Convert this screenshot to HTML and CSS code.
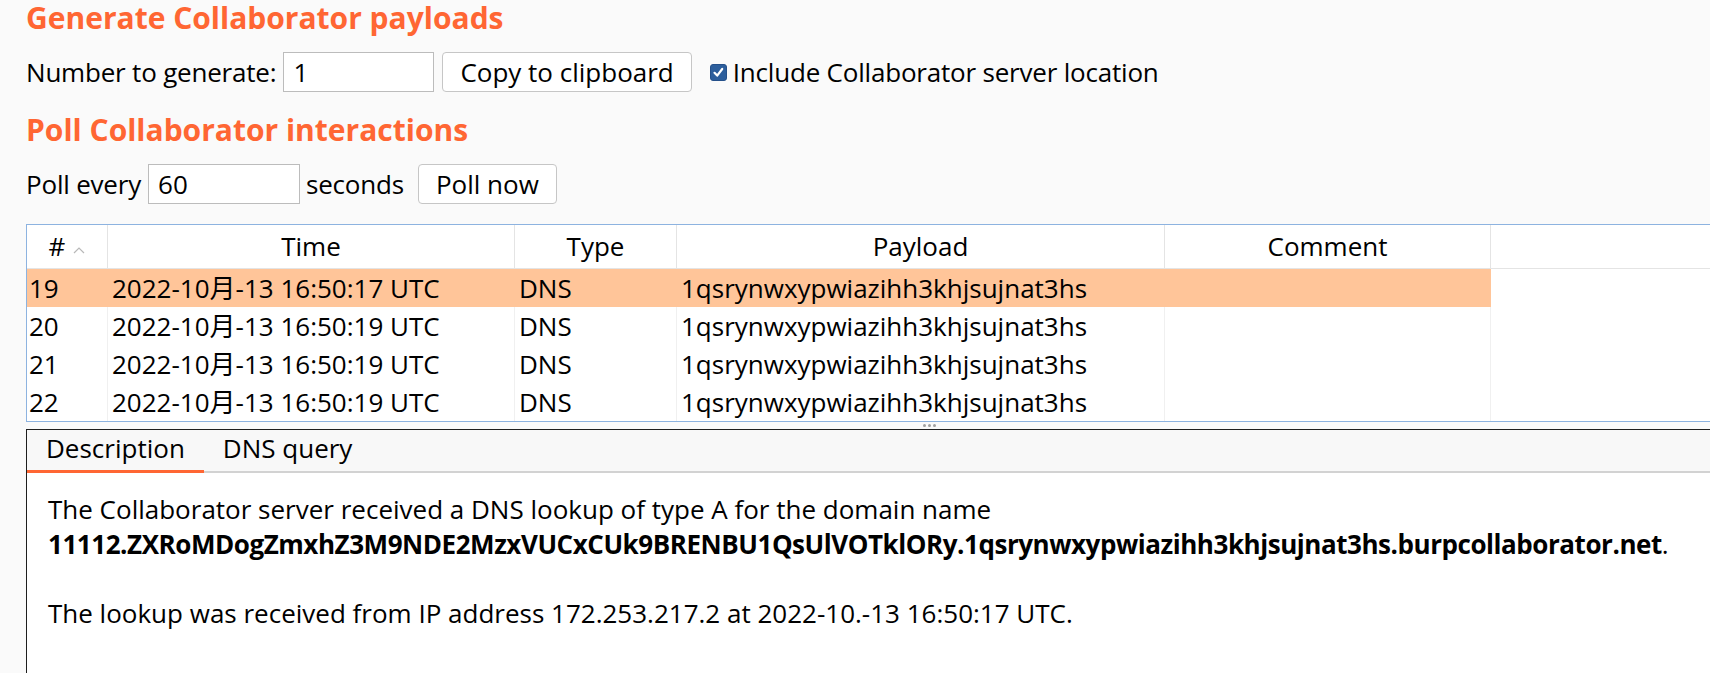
FILE: index.html
```html
<!DOCTYPE html>
<html lang="en">
<head>
<meta charset="utf-8">
<title>Collaborator client</title>
<link rel="stylesheet" href="styles.css">
</head>
<body>
<div class="page">
  <h2 class="title title1">Generate Collaborator payloads</h2>
  <div class="row row1">
    <span class="label">Number to generate:</span>
    <input class="field" type="text" value="1">
    <button class="btn btn-copy">Copy to clipboard</button>
    <span class="check"><svg width="17" height="17" viewBox="0 0 17 17"><rect x="0.5" y="0.5" width="16" height="16" rx="2.5" fill="#2c5e9c" stroke="#24508a"/><polyline points="4.5,8.8 7.2,11.6 12.2,5" fill="none" stroke="#fff" stroke-width="2.2" stroke-linecap="round" stroke-linejoin="round"/></svg></span>
    <span class="label">Include Collaborator server location</span>
  </div>
  <h2 class="title title2">Poll Collaborator interactions</h2>
  <div class="row row2">
    <span class="label">Poll every</span>
    <input class="field field-poll" type="text" value="60">
    <span class="label label-sec">seconds</span>
    <button class="btn btn-poll">Poll now</button>
  </div>

  <div class="grid-table">
    <div class="thead">
      <div class="th">#<svg class="sort" width="12" height="8" viewBox="0 0 12 8"><polyline points="1,7 6,2 11,7" fill="none" stroke="#b8b8b8" stroke-width="1.2"/></svg></div>
      <div class="th">Time</div>
      <div class="th">Type</div>
      <div class="th">Payload</div>
      <div class="th">Comment</div>
      <div class="th th-fill"></div>
    </div>
    <div class="trow sel">
      <div class="td td-num">19</div>
      <div class="td">2022-10月-13 16:50:17 UTC</div>
      <div class="td">DNS</div>
      <div class="td">1qsrynwxypwiazihh3khjsujnat3hs</div>
      <div class="td"></div>
      <div class="td td-fill"></div>
    </div>
    <div class="trow">
      <div class="td td-num">20</div>
      <div class="td">2022-10月-13 16:50:19 UTC</div>
      <div class="td">DNS</div>
      <div class="td">1qsrynwxypwiazihh3khjsujnat3hs</div>
      <div class="td"></div>
      <div class="td td-fill"></div>
    </div>
    <div class="trow">
      <div class="td td-num">21</div>
      <div class="td">2022-10月-13 16:50:19 UTC</div>
      <div class="td">DNS</div>
      <div class="td">1qsrynwxypwiazihh3khjsujnat3hs</div>
      <div class="td"></div>
      <div class="td td-fill"></div>
    </div>
    <div class="trow">
      <div class="td td-num">22</div>
      <div class="td">2022-10月-13 16:50:19 UTC</div>
      <div class="td">DNS</div>
      <div class="td">1qsrynwxypwiazihh3khjsujnat3hs</div>
      <div class="td"></div>
      <div class="td td-fill"></div>
    </div>
  </div>

  <div class="splitter"><span class="dot"></span><span class="dot"></span><span class="dot"></span></div>

  <div class="panel">
    <div class="tabs">
      <div class="tab active">Description</div>
      <div class="tab">DNS query</div>
    </div>
    <div class="content">
      <p>The Collaborator server received a DNS lookup of type A for the domain name<br><b>11112.ZXRoMDogZmxhZ3M9NDE2MzxVUCxCUk9BRENBU1QsUlVOTklORy.1qsrynwxypwiazihh3khjsujnat3hs.burpcollaborator.net</b>.</p>
      <p>The lookup was received from IP address 172.253.217.2 at 2022-10.-13 16:50:17 UTC.</p>
    </div>
  </div>
</div>
</body>
</html>
```

FILE: styles.css
```css
html, body {
  margin: 0;
  padding: 0;
  background: #fafafa;
  overflow: hidden;
}
body {
  font-family: "Open Sans", "Noto Sans CJK SC", sans-serif;
  font-size: 26px;
  color: #000;
}
.page {
  padding-left: 26px;
  height: 673px;
}
.title {
  margin: 0;
  font-size: 30px;
  font-weight: 700;
  line-height: 32px;
  color: #ff6633;
  white-space: nowrap;
}
.title1 {
  line-height: 36px;
}
.title2 {
  margin-top: 22px;
}
.row {
  display: flex;
  align-items: center;
  height: 40px;
  white-space: nowrap;
}
.row1 {
  margin-top: 16px;
}
.row2 {
  margin-top: 18px;
}
.label {
  line-height: 40px;
  letter-spacing: -0.2px;
}
.field {
  box-sizing: border-box;
  width: 151px;
  height: 40px;
  margin: 0 0 0 7px;
  padding: 0 9px;
  border: 1px solid #bcbcbc;
  background: #fff;
  font: inherit;
  color: #000;
  outline: none;
}
.field-poll {
  width: 152px;
}
.btn {
  box-sizing: border-box;
  height: 40px;
  margin-left: 8px;
  padding: 0 17px;
  border: 1px solid #c6c6c6;
  border-radius: 4px;
  background: #fff;
  font: inherit;
  color: #000;
  line-height: 38px;
}
.btn-poll {
  margin-left: 14px;
}
.label-sec {
  margin-left: 6px;
}
.check {
  display: flex;
  margin-left: 18px;
  margin-right: 6px;
}

.grid-table {
  margin-top: 20px;
  border: 1px solid #8db3e0;
  border-right: none;
  background: #fff;
}
.thead, .trow {
  display: grid;
  grid-template-columns: 81px 407px 162px 488px 326px 1fr;
}
.thead {
  border-bottom: 1px solid #e4e4e4;
}
.th {
  box-sizing: border-box;
  height: 43px;
  line-height: 43px;
  text-align: center;
  border-right: 1px solid #e4e4e4;
  white-space: nowrap;
}
.th-fill {
  border-right: none;
}
.sort {
  margin-left: 8px;
  vertical-align: 2px;
}
.td {
  box-sizing: border-box;
  height: 38px;
  line-height: 38px;
  padding-left: 4px;
  border-right: 1px solid #f0f0f0;
  white-space: nowrap;
  overflow: hidden;
}
.td-num {
  padding-left: 2px;
}
.td-fill {
  border-right: none;
}
.sel .td {
  background: #ffc599;
  border-right-color: #ffc599;
}
.sel .td-fill {
  background: #fff;
}

.splitter {
  height: 7px;
  display: flex;
  align-items: center;
  gap: 2px;
  padding-left: 897px;
}
.dot {
  width: 3px;
  height: 3px;
  border-radius: 50%;
  background: #a0a0a0;
}

.panel {
  border-top: 1px solid #1e1e1e;
  border-left: 1px solid #1e1e1e;
  background: #fff;
  height: 260px;
}
.tabs {
  display: flex;
  height: 41px;
  background: #f8f8f8;
  border-bottom: 2px solid #d2d2d2;
}
.tab {
  box-sizing: border-box;
  height: 43px;
  padding: 0 19px 4px;
  line-height: 36px;
  white-space: nowrap;
}
.tab.active {
  border-bottom: 3px solid #ff6633;
}
.content {
  padding: 19px 21px 0;
}
.content p {
  margin: 0 0 34.5px;
  line-height: 34.5px;
  white-space: nowrap;
}
.content b {
  font-weight: 700;
  letter-spacing: -0.45px;
}
```
